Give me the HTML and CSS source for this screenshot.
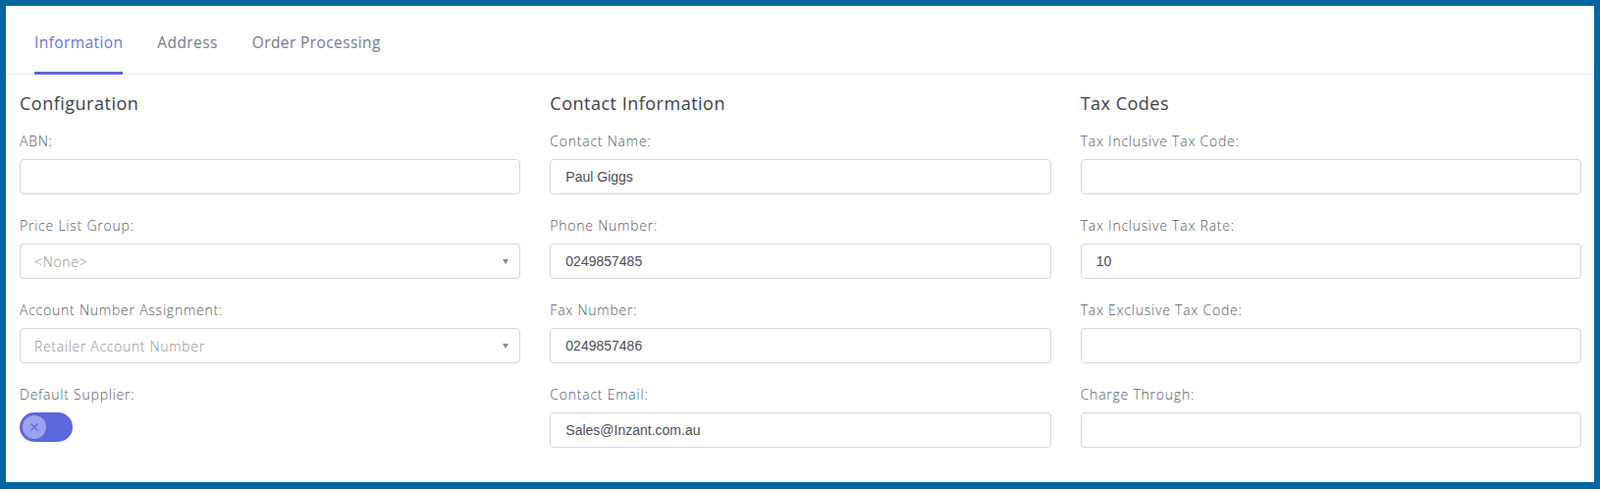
FILE: index.html
```html
<!DOCTYPE html>
<html lang="en">
<head>
<meta charset="utf-8">
<title>Supplier</title>
<link rel="stylesheet" href="styles.css">
</head>
<body>
<div class="frame">
  <nav class="tabs">
    <a class="tab active">Information</a>
    <a class="tab">Address</a>
    <a class="tab">Order Processing</a>
  </nav>
  <div class="content">
    <section class="col">
      <h3 class="heading">Configuration</h3>
      <div class="field">
        <label class="label">ABN:</label>
        <input class="input" type="text" value="">
      </div>
      <div class="field">
        <label class="label">Price List Group:</label>
        <div class="select"><span class="select-text">&lt;None&gt;</span><span class="caret"></span></div>
      </div>
      <div class="field">
        <label class="label">Account Number Assignment:</label>
        <div class="select"><span class="select-text">Retailer Account Number</span><span class="caret"></span></div>
      </div>
      <div class="field">
        <label class="label">Default Supplier:</label>
        <div class="toggle">
          <span class="knob">
            <svg width="10" height="10" viewBox="0 0 10 10"><path d="M1.5 1.5 L8.5 8.5 M8.5 1.5 L1.5 8.5" stroke="#5d68dd" stroke-width="1.1" fill="none"/></svg>
          </span>
        </div>
      </div>
    </section>
    <section class="col">
      <h3 class="heading">Contact Information</h3>
      <div class="field">
        <label class="label">Contact Name:</label>
        <input class="input" type="text" value="Paul Giggs">
      </div>
      <div class="field">
        <label class="label">Phone Number:</label>
        <input class="input" type="text" value="0249857485">
      </div>
      <div class="field">
        <label class="label">Fax Number:</label>
        <input class="input" type="text" value="0249857486">
      </div>
      <div class="field">
        <label class="label">Contact Email:</label>
        <input class="input" type="text" value="Sales@Inzant.com.au">
      </div>
    </section>
    <section class="col">
      <h3 class="heading">Tax Codes</h3>
      <div class="field">
        <label class="label">Tax Inclusive Tax Code:</label>
        <input class="input" type="text" value="">
      </div>
      <div class="field">
        <label class="label">Tax Inclusive Tax Rate:</label>
        <input class="input" type="text" value="10">
      </div>
      <div class="field">
        <label class="label">Tax Exclusive Tax Code:</label>
        <input class="input" type="text" value="">
      </div>
      <div class="field">
        <label class="label">Charge Through:</label>
        <input class="input" type="text" value="">
      </div>
    </section>
  </div>
</div>
</body>
</html>
```

FILE: styles.css
```css
* { box-sizing: border-box; }
html, body { margin: 0; padding: 0; }
body {
  background: #0066a1;
  width: 1630px;
  height: 498px;
  padding: 6px 6px 7px 6px;
  font-family: "Open Sans", "Liberation Sans", sans-serif;
}
.frame {
  background: #ffffff;
  height: 485px;
}
.tabs {
  display: flex;
  gap: 35px;
  padding-left: 29px;
  border-bottom: 1px solid #ebedf2;
  height: 70px;
}
.tab {
  display: block;
  font-size: 15.5px;
  line-height: 22px;
  padding-top: 26px;
  padding-bottom: 19px;
  height: 70px;
  border-bottom: 3px solid transparent;
  color: #777a8a;
  letter-spacing: 0.4px;
  cursor: pointer;
}
.tab.active {
  color: #6a73e6;
  border-bottom-color: #5b67dc;
}
.content {
  display: grid;
  grid-template-columns: 1fr 1fr 1fr;
  column-gap: 30px;
  padding: 16px 13px 0 14px;
}
.heading {
  margin: 0 0 14px 0;
  font-size: 18px;
  line-height: 27px;
  font-weight: 500;
  letter-spacing: 0.5px;
  color: #3c3f4c;
}
.field {
  margin-bottom: 21px;
}
.label {
  display: block;
  font-size: 14px;
  line-height: 21px;
  letter-spacing: 0.77px;
  font-weight: 300;
  color: #575b66;
  margin-bottom: 8px;
}
.input {
  display: block;
  width: 100%;
  height: 36px;
  border: 1px solid #d3d7de;
  border-radius: 4px;
  padding: 0 15px;
  font-family: "Liberation Sans", Arial, sans-serif;
  font-size: 14px;
  color: #4a4f57;
  background: #fff;
  outline: none;
}
.select {
  display: flex;
  align-items: center;
  justify-content: space-between;
  height: 36px;
  border: 1px solid #d3d7de;
  border-radius: 4px;
  padding: 0 11px 0 14px;
}
.select-text {
  font-size: 14px;
  letter-spacing: 0.68px;
  font-weight: 300;
  color: #8e9098;
}
.caret {
  width: 0;
  height: 0;
  border-left: 3.5px solid transparent;
  border-right: 3.5px solid transparent;
  border-top: 5px solid #888888;
}
.toggle {
  width: 54px;
  height: 30px;
  border-radius: 15px;
  background: #5b67dc;
  padding: 3px;
}
.knob {
  display: flex;
  align-items: center;
  justify-content: center;
  width: 24px;
  height: 24px;
  border-radius: 50%;
  background: #9ba2ee;
}
```
